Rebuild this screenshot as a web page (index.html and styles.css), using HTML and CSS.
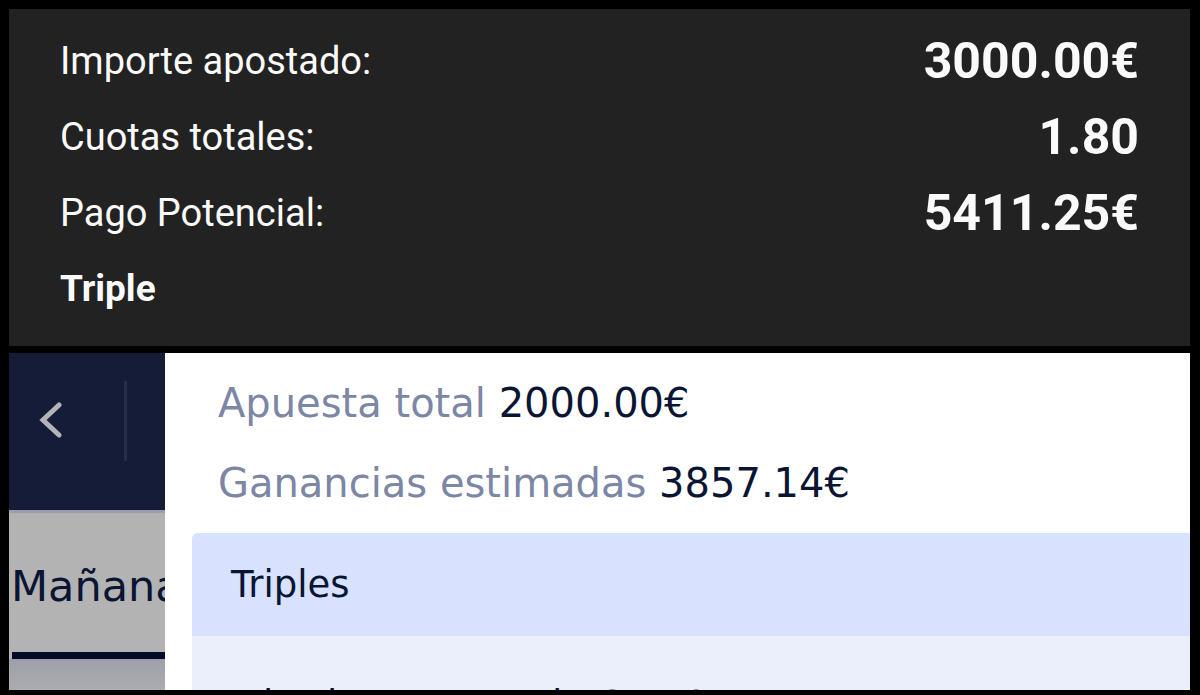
FILE: index.html
```html
<!DOCTYPE html>
<html lang="es">
<head>
<meta charset="utf-8">
<title>Resumen de apuestas</title>
<link rel="stylesheet" href="styles.css">
</head>
<body>
<main class="page">
  <section class="summary">
    <dl class="summary-list">
      <div class="summary-row"><dt>Importe apostado:</dt><dd>3000.00€</dd></div>
      <div class="summary-row"><dt>Cuotas totales:</dt><dd>1.80</dd></div>
      <div class="summary-row"><dt>Pago Potencial:</dt><dd>5411.25€</dd></div>
    </dl>
    <p class="summary-type">Triple</p>
  </section>
  <section class="slip">
    <aside class="side">
      <div class="side-top">
        <button class="back" type="button" aria-label="Volver">
          <svg viewBox="0 0 24 38" width="24" height="38" aria-hidden="true"><path d="M20 3 4 18l16 15" fill="none" stroke="#b4b4b8" stroke-width="5" stroke-linecap="round"/></svg>
        </button>
        <span class="divider"></span>
      </div>
      <a class="day" href="#">Mañana</a>
      <div class="side-rest"></div>
    </aside>
    <div class="bet">
      <div class="totals">
        <p class="total">Apuesta total <strong>2000.00€</strong></p>
        <p class="total">Ganancias estimadas <strong>3857.14€</strong></p>
      </div>
      <div class="card">
        <h2 class="card-title">Triples</h2>
        <div class="card-body">Mi sel. Numeros de G1.10</div>
      </div>
    </div>
  </section>
</main>
</body>
</html>
```
FILE: styles.css
```css
* { box-sizing: border-box; }
body { margin: 0; background: #000; }
p, dl, dd, h2 { margin: 0; }

.page {
  display: flex;
  flex-direction: column;
  gap: 7px;
  height: 100vh;
  padding: 9px 10px 5px 9px;
}

.summary {
  padding: 14px 51px 20px;
  background: #222;
  color: #fafafa;
  font-family: Roboto, sans-serif;
}
.summary-row {
  display: flex;
  align-items: center;
  justify-content: space-between;
  height: 76px;
}
.summary-row dt { font-size: 38px; }
.summary-row dd { font-size: 50px; font-weight: 700; }
.summary-type { font-size: 37px; font-weight: 700; line-height: 75px; }

.slip {
  display: flex;
  flex: 1;
  min-height: 0;
  overflow: hidden;
  background: #fff;
  font-family: "DejaVu Sans", Verdana, sans-serif;
}

.side {
  display: flex;
  flex-direction: column;
  flex: none;
  width: 156px;
  overflow: hidden;
}
.side-top {
  display: flex;
  align-items: center;
  justify-content: space-between;
  height: 157px;
  padding: 0 38px 22px 30px;
  background: #141c38;
}
.back { display: flex; padding: 0; border: 0; background: none; }
.divider { width: 3px; height: 80px; background: #252d48; }
.day {
  height: 149px;
  padding-left: 2px;
  border-top: 3px solid #9c9cab;
  background: linear-gradient(#020b28, #020b28) 3px 100% / 100% 7px no-repeat #b3b3b3;
  color: #0a1534;
  font-size: 43px;
  line-height: 146px;
  text-decoration: none;
}
.side-rest { flex: 1; background: linear-gradient(#9f9fa8, #acacb2); }

.bet { flex: 1; min-width: 0; padding-left: 27px; }
.totals { padding: 10px 26px; }
.total { color: #7c86a5; font-size: 40px; line-height: 80px; white-space: nowrap; }
.total strong { color: #0a1534; font-weight: 400; }
.card { overflow: hidden; border-radius: 6px 0 0; background: #eaeffb; color: #0a1534; }
.card-title { padding-left: 39px; background: #d8e1fd; font-size: 37px; font-weight: 400; line-height: 103px; }
.card-body { padding: 39px 39px 0; font-size: 37px; line-height: 60px; white-space: nowrap; }
```
